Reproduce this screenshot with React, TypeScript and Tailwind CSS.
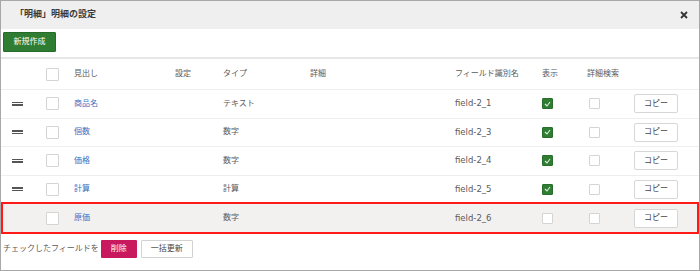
import React from 'react';

const ROWS = [
  { name: '商品名', type: 'テキスト', field: 'field-2_1', shown: true },
  { name: '個数', type: '数字', field: 'field-2_3', shown: true },
  { name: '価格', type: '数字', field: 'field-2_4', shown: true },
  { name: '計算', type: '計算', field: 'field-2_5', shown: true },
];

const COLS = 'grid grid-cols-[45px_28px_103px_46px_88px_144px_87px_45px_48px_1fr] items-center';

function Box({ size = 'w-[13px] h-[13px]' }: { size?: string }) {
  return <div className={`${size} border border-[#d4d4d4] bg-white rounded-[1px]`} />;
}

function Checked() {
  return (
    <div className="w-[11px] h-[11px] bg-[#2f7d32] border border-[#2a6e2d] rounded-[1px] flex items-center justify-center">
      <svg width="7" height="6" viewBox="0 0 7 6">
        <polyline points="1,3 3,5 6,1" fill="none" stroke="#dfeedd" strokeWidth="1.1" />
      </svg>
    </div>
  );
}

function Handle() {
  return (
    <div className="flex flex-col gap-[1px] pl-[11px]">
      <div className="w-[11px] h-[1.5px] bg-[#555]" />
      <div className="w-[11px] h-[1.5px] bg-[#555]" />
    </div>
  );
}

function CopyButton() {
  return (
    <button className="w-[44px] h-[19px] border border-[#d6d6d6] bg-white rounded-[2px] text-[8px] text-[#444] -ml-[1px]">
      コピー
    </button>
  );
}

export default function App() {
  return (
    <div className="w-[700px] h-[271px] border border-[#a8a8a8] bg-white text-[8px] text-[#5a5a5a] font-['DejaVu_Sans','Noto_Sans_CJK_JP',sans-serif]">
      {/* Header */}
      <div className="h-[28px] bg-[#efefef] flex items-center justify-between pl-[14px] pr-[11px]">
        <span className="text-[9px] font-bold text-[#3a3a3a]">「明細」明細の設定</span>
        <svg width="8" height="8" viewBox="0 0 8 8">
          <path d="M1 1 L7 7 M7 1 L1 7" stroke="#333" strokeWidth="1.8" />
        </svg>
      </div>

      {/* Toolbar */}
      <div className="pt-[3px] pl-[2px]">
        <button className="w-[53px] h-[20px] bg-[#2f7d32] border border-[#276a2a] text-white text-[8px] rounded-[1px]">
          新規作成
        </button>
      </div>
      <div className="mt-[5px] h-[2px] bg-[#e6e6e6]" />

      {/* Table header */}
      <div className={`${COLS} h-[31px] border-b border-[#eeeeee]`}>
        <div />
        <Box />
        <span>見出し</span>
        <span className="-ml-[2px]">設定</span>
        <span>タイプ</span>
        <span className="-ml-[1px]">詳細</span>
        <span>フィールド識別名</span>
        <span>表示</span>
        <span>詳細検索</span>
        <div />
      </div>

      {/* Rows */}
      {ROWS.map(row => (
        <div key={row.field} className={`${COLS} h-[28.5px] border-b border-[#eeeeee]`}>
          <Handle />
          <Box />
          <span className="text-[#3b70c2]">{row.name}</span>
          <div />
          <span>{row.type}</span>
          <div />
          <span className="text-[8.5px]">{row.field}</span>
          <div>{row.shown ? <Checked /> : <Box size="w-[11px] h-[11px]" />}</div>
          <div className="pl-[2px]"><Box size="w-[11px] h-[11px]" /></div>
          <CopyButton />
        </div>
      ))}

      {/* Highlighted row */}
      <div className={`${COLS} h-[32px] border-2 border-[#ff1a1a] bg-[#f2f1ef] -mt-[2px]`}>
        <div />
        <div className="-ml-[2px]"><Box /></div>
        <span className="text-[#3b70c2] -ml-[2px]">原価</span>
        <div />
        <span className="-ml-[2px]">数字</span>
        <div />
        <span className="text-[8.5px] -ml-[2px]">field-2_6</span>
        <div className="-ml-[2px]"><Box size="w-[11px] h-[11px]" /></div>
        <div><Box size="w-[11px] h-[11px]" /></div>
        <div className="-ml-[2px]"><CopyButton /></div>
      </div>

      {/* Footer */}
      <div className="flex items-center gap-[2px] pl-[2px] mt-[6px]">
        <span>チェックしたフィールドを</span>
        <button className="w-[36px] h-[18px] bg-[#c8185e] text-white text-[8px] rounded-[1px]">削除</button>
        <button className="w-[52px] h-[18px] ml-[2px] bg-white border border-[#d2d2d2] text-[8px] text-[#444] rounded-[1px]">
          一括更新
        </button>
      </div>
    </div>
  );
}
